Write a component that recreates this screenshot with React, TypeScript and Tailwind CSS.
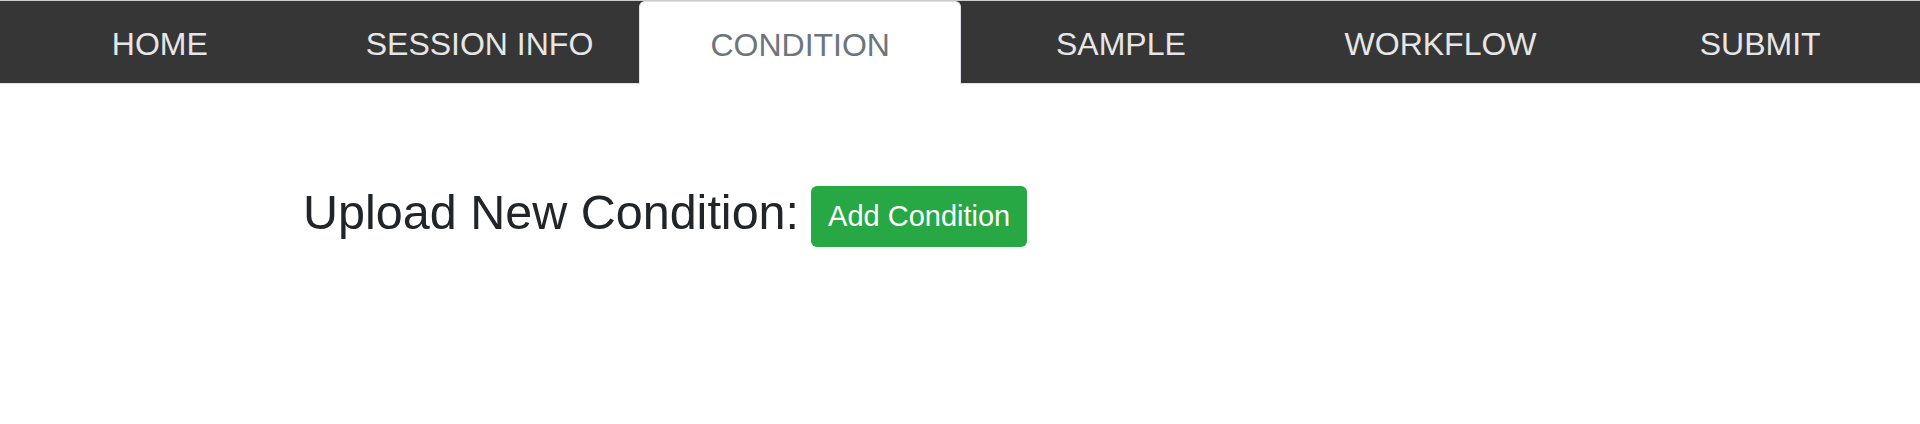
const tabs = ['HOME', 'SESSION INFO', 'CONDITION', 'SAMPLE', 'WORKFLOW', 'SUBMIT'];

function NavTabs({ active }: { active: string }) {
  return (
    <nav className="flex border-t border-b border-t-[#cccccc] border-b-[#dee2e6] bg-[#363636]">
      {tabs.map((tab) =>
        tab === active ? (
          <a
            key={tab}
            className="-mb-px flex h-[83px] flex-1 items-center justify-center rounded-t-md border border-[#dee2e6] border-b-white bg-white pt-1 text-[32px] text-[#6c757d]"
          >
            {tab}
          </a>
        ) : (
          <a
            key={tab}
            className="flex h-[82px] flex-1 items-center justify-center pt-1 text-[32px] text-[#e6e6e6]"
          >
            {tab}
          </a>
        ),
      )}
    </nav>
  );
}

export default function App() {
  return (
    <div className="min-h-[424px] bg-white font-['Liberation_Sans',Arial,sans-serif]">
      <NavTabs active="CONDITION" />
      <main className="pl-[303px] pt-[98px]">
        <div className="flex items-center">
          <h1 className="mb-2 text-[48.5px] leading-tight text-[#212529]">Upload New Condition:</h1>
          <button className="ml-3 h-[61px] rounded-md bg-[#28a745] px-[17px] text-[29px] text-white">
            Add Condition
          </button>
        </div>
      </main>
    </div>
  );
}
